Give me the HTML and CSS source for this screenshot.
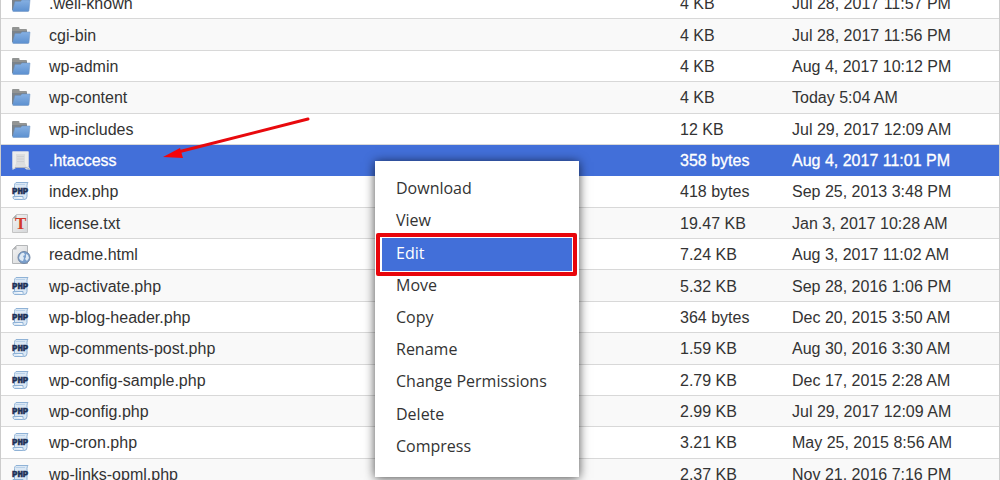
FILE: index.html
```html
<!DOCTYPE html>
<html lang="en">
<head>
    <meta charset="UTF-8">
    <meta name="viewport" content="width=device-width, initial-scale=1.0">
    <title>File Manager</title>
    <link rel="stylesheet" href="styles.css">
</head>
<body>
    <!-- Icon shapes -->
    <svg class="sprite" aria-hidden="true">
        <defs>
            <linearGradient id="blue" x1="0" y1="0" x2="0" y2="1">
                <stop offset="0" stop-color="#86b0e2"/>
                <stop offset="1" stop-color="#5c90d0"/>
            </linearGradient>
            <linearGradient id="paper" x1="0" y1="0" x2="1" y2="1">
                <stop offset="0" stop-color="#f4f4f4"/>
                <stop offset="1" stop-color="#d4d6d8"/>
            </linearGradient>
            <symbol id="folder" viewBox="0 0 20 20">
                <path d="M1 3q0-1 1-1h5.500q1 0 1 1v1H15q1 0 1 1V17H1z" fill="#929493"/>
                <path d="M1 6h15v11H1z" fill="#7b838b"/>
                <path d="M4 8.500h5.500l1.500-1.500h8L18 17.500q-.2 1-1 1H2.500q-1 0-.9-1z" fill="url(#blue)" stroke="#6a90c0" stroke-width=".5"/>
            </symbol>
            <symbol id="file" viewBox="0 0 20 20">
                <path d="M1.500 1.500h16v15l2 3h-4l-2-1.500H5L1.500 20z" fill="#dedfdf"/>
                <path d="M1.500 1.500h16v15H15v-2H4v2.500l-2.500 1.500z" fill="#ececeb"/>
                <path d="M5 4h9v11H5z" fill="#dcddde"/>
                <path d="M6 6.500h7M6 9h7M6 11.500h7" stroke="#cccdcf" stroke-width=".8"/>
                <path d="M4 17.500h11l4 1.700" stroke="#aeb2bd" fill="none"/>
            </symbol>
            <symbol id="php" viewBox="0 0 20 20">
                <path d="M5 1.500h12q-1 1-1 3v11q0 3-3 3H3.500q-2-1-1.500-3h1.500v-11q0-2 1.500-3z" fill="#dbe8f5" stroke="#8fb2d6"/>
                <path d="M2.500 15.500h9.500q-.5 2 1 3" fill="#f4f8fc" stroke="#8fb2d6"/>
                <path d="M5 3.500h9" stroke="#b9d1e9"/>
                <text x="1" y="13" class="php-text">PHP</text>
            </symbol>
            <symbol id="txt" viewBox="0 0 20 20">
                <path d="M5.500 1.500h11v18h-15V5.500z" fill="url(#paper)" stroke="#c4c4c4"/>
                <path d="M1.500 5.500h4v-4z" fill="#aaa"/>
                <text x="4" y="16" class="txt-text">T</text>
            </symbol>
            <symbol id="html" viewBox="0 0 20 20">
                <path d="M5.500 1.500h11v18h-15V5.500z" fill="url(#paper)" stroke="#b4b6b8"/>
                <path d="M1.500 5.500h4v-4z" fill="#b4b6b8"/>
                <circle cx="13" cy="13.500" r="6" fill="#7ba0cd" stroke="#7388a6"/>
                <path d="M9 11q2-3 4-2l1 2-2 1 1 2-1 3q-3 0-4-3zM15 10l2 1 1 3-2 3-2-2 1-2z" fill="#dfeaf5"/>
            </symbol>
        </defs>
    </svg>

    <main class="file-manager">
        <table class="file-list" aria-label="Files">
            <tbody>
                <tr>
                    <td class="icon"><svg><use href="#folder"/></svg></td>
                    <td>.well-known</td>
                    <td class="size">4 KB</td>
                    <td class="date">Jul 28, 2017 11:57 PM</td>
                </tr>
                <tr>
                    <td class="icon"><svg><use href="#folder"/></svg></td>
                    <td>cgi-bin</td>
                    <td class="size">4 KB</td>
                    <td class="date">Jul 28, 2017 11:56 PM</td>
                </tr>
                <tr>
                    <td class="icon"><svg><use href="#folder"/></svg></td>
                    <td>wp-admin</td>
                    <td class="size">4 KB</td>
                    <td class="date">Aug 4, 2017 10:12 PM</td>
                </tr>
                <tr>
                    <td class="icon"><svg><use href="#folder"/></svg></td>
                    <td>wp-content</td>
                    <td class="size">4 KB</td>
                    <td class="date">Today 5:04 AM</td>
                </tr>
                <tr>
                    <td class="icon"><svg><use href="#folder"/></svg></td>
                    <td>wp-includes</td>
                    <td class="size">12 KB</td>
                    <td class="date">Jul 29, 2017 12:09 AM</td>
                </tr>
                <tr class="selected">
                    <td class="icon"><svg><use href="#file"/></svg></td>
                    <td>.htaccess</td>
                    <td class="size">358 bytes</td>
                    <td class="date">Aug 4, 2017 11:01 PM</td>
                </tr>
                <tr>
                    <td class="icon"><svg><use href="#php"/></svg></td>
                    <td>index.php</td>
                    <td class="size">418 bytes</td>
                    <td class="date">Sep 25, 2013 3:48 PM</td>
                </tr>
                <tr>
                    <td class="icon"><svg><use href="#txt"/></svg></td>
                    <td>license.txt</td>
                    <td class="size">19.47 KB</td>
                    <td class="date">Jan 3, 2017 10:28 AM</td>
                </tr>
                <tr>
                    <td class="icon"><svg><use href="#html"/></svg></td>
                    <td>readme.html</td>
                    <td class="size">7.24 KB</td>
                    <td class="date">Aug 3, 2017 11:02 AM</td>
                </tr>
                <tr>
                    <td class="icon"><svg><use href="#php"/></svg></td>
                    <td>wp-activate.php</td>
                    <td class="size">5.32 KB</td>
                    <td class="date">Sep 28, 2016 1:06 PM</td>
                </tr>
                <tr>
                    <td class="icon"><svg><use href="#php"/></svg></td>
                    <td>wp-blog-header.php</td>
                    <td class="size">364 bytes</td>
                    <td class="date">Dec 20, 2015 3:50 AM</td>
                </tr>
                <tr>
                    <td class="icon"><svg><use href="#php"/></svg></td>
                    <td>wp-comments-post.php</td>
                    <td class="size">1.59 KB</td>
                    <td class="date">Aug 30, 2016 3:30 AM</td>
                </tr>
                <tr>
                    <td class="icon"><svg><use href="#php"/></svg></td>
                    <td>wp-config-sample.php</td>
                    <td class="size">2.79 KB</td>
                    <td class="date">Dec 17, 2015 2:28 AM</td>
                </tr>
                <tr>
                    <td class="icon"><svg><use href="#php"/></svg></td>
                    <td>wp-config.php</td>
                    <td class="size">2.99 KB</td>
                    <td class="date">Jul 29, 2017 12:09 AM</td>
                </tr>
                <tr>
                    <td class="icon"><svg><use href="#php"/></svg></td>
                    <td>wp-cron.php</td>
                    <td class="size">3.21 KB</td>
                    <td class="date">May 25, 2015 8:56 AM</td>
                </tr>
                <tr>
                    <td class="icon"><svg><use href="#php"/></svg></td>
                    <td>wp-links-opml.php</td>
                    <td class="size">2.37 KB</td>
                    <td class="date">Nov 21, 2016 7:16 PM</td>
                </tr>
            </tbody>
        </table>

        <!-- Arrow pointing at the selected file -->
        <svg class="arrow" viewBox="0 0 150 44" aria-hidden="true">
            <path d="M15 37L145 4" stroke="#e8090d" stroke-width="3" stroke-linecap="round"/>
            <path d="M0 42L17 33l3 10z" fill="#f40408"/>
        </svg>

        <!-- Right click menu -->
        <ul class="context-menu">
            <li><button type="button">Download</button></li>
            <li><button type="button">View</button></li>
            <li class="active"><button type="button">Edit</button></li>
            <li><button type="button">Move</button></li>
            <li><button type="button">Copy</button></li>
            <li><button type="button">Rename</button></li>
            <li><button type="button">Change Permissions</button></li>
            <li><button type="button">Delete</button></li>
            <li><button type="button">Compress</button></li>
        </ul>
    </main>
</body>
</html>
```
FILE: styles.css
```css
* {
    box-sizing: border-box;
}

body {
    margin: 0;
    height: 100vh;
    overflow: hidden;
    background-color: #fff;
    color: #333;
    font-family: "Liberation Sans", Arial, sans-serif;
    font-size: 16px;
}

.sprite {
    position: absolute;
    width: 0;
    height: 0;
}

.file-manager {
    position: relative;
    height: 100%;
    overflow: hidden;
    border-left: 1px solid #ccc;
    border-right: 1px solid #ccc;
}

/* File list, scrolled down a little */
.file-list {
    width: 100%;
    height: 502px;
    margin-top: -12px;
    border-spacing: 0;
    table-layout: fixed;
}

.file-list td {
    padding: 2px 0 0;
    line-height: 20px;
    white-space: nowrap;
    border-bottom: 1px solid #d8d8d8;
}

.file-list tr:nth-child(even) {
    background-color: #f9f9f9;
}

.file-list .icon {
    width: 48px;
    padding: 0 0 0 10px;
}

.icon svg {
    display: block;
    width: 20px;
    height: 20px;
}

.file-list .size {
    width: 112px;
}

.file-list .date {
    width: 207px;
}

.file-list tr.selected {
    background-color: #426fd9;
    color: #fff;
}

.file-list .selected td {
    border-color: #426fd9;
    -webkit-text-stroke: 0.3px #fff;
}

.php-text {
    font: bold 9px "Liberation Mono", monospace;
    fill: #1d2f55;
    stroke: #1d2f55;
    stroke-width: 0.6px;
}

.txt-text {
    font: bold 17px "Liberation Serif", serif;
    fill: #d23a2a;
}

/* Arrow */
.arrow {
    position: absolute;
    left: 162px;
    top: 115px;
    width: 150px;
    height: 44px;
    fill: none;
}

/* Context Menu */
.context-menu {
    position: absolute;
    left: 374px;
    top: 161px;
    width: 204px;
    height: 316px;
    margin: 0;
    padding: 13px 7px;
    display: grid;
    grid-auto-rows: 1fr;
    list-style: none;
    background-color: #fff;
    box-shadow: 0 1px 10px rgba(0, 0, 0, 0.7);
}

.context-menu li {
    position: relative;
}

.context-menu button {
    display: block;
    width: 100%;
    height: 100%;
    padding: 0 14px 4px;
    border: none;
    background: none;
    color: #333;
    font-family: "Open Sans", sans-serif;
    font-size: 16px;
    line-height: 24px;
    text-align: left;
    cursor: pointer;
}

.context-menu .active button {
    background-color: #426fd9;
    color: #fff;
}

/* Red frame round the active item */
.context-menu .active::after {
    content: "";
    position: absolute;
    inset: -5px -5px -5px -6px;
    border: 4px solid #e8050b;
    border-radius: 2px;
    pointer-events: none;
}
```
